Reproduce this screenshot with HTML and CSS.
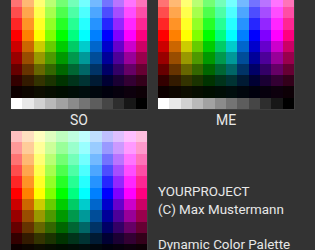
FILE: index.html
```html
<!DOCTYPE html>
<html lang="en">
<head>
  <meta charset="UTF-8">
  <meta name="viewport" content="width=device-width, initial-scale=1.0">
  <title>Dynamic Color Palette</title>
  <link rel="stylesheet" href="styles.css">
</head>
<body>
  <div class="page">
    <div class="slot">
      <div class="palette"></div>
      <div class="label">SO</div>
    </div>
    <div class="slot">
      <div class="palette"></div>
      <div class="label">ME</div>
    </div>
    <div class="slot">
      <div class="palette"></div>
      <div class="label">&nbsp;</div>
    </div>
    <div class="info">
      <p>YOURPROJECT</p>
      <p>(C) Max Mustermann</p>
      <p>&nbsp;</p>
      <p>Dynamic Color Palette</p>
    </div>
  </div>
  <script>
    const hues = [0, 30, 60, 90, 120, 150, 180, 210, 240, 270, 300, 330];
    const tints = [0.75, 0.6, 0.45, 0.3, 0.15, 0];
    const shades = [0.8, 0.6, 0.4, 0.2, 0.05];

    function hueRgb(h) {
      const f = n => {
        const k = (n + h / 60) % 6;
        return 1 - Math.max(0, Math.min(k, 4 - k, 1));
      };
      return [f(5), f(3), f(1)];
    }

    function toCss(rgb) {
      return 'rgb(' + rgb.map(v => Math.round(v * 255)).join(',') + ')';
    }

    function rows() {
      const out = [];
      tints.forEach(t => out.push(hues.map(h => hueRgb(h).map(v => v + (1 - v) * t))));
      shades.forEach(s => out.push(hues.map(h => hueRgb(h).map(v => v * s))));
      out.push(hues.map((h, i) => { const g = 1 - i / 11; return [g, g, g]; }));
      return out;
    }

    document.querySelectorAll('.palette').forEach(p => {
      rows().forEach(row => {
        row.forEach(rgb => {
          const c = document.createElement('div');
          c.className = 'swatch';
          c.style.background = toCss(rgb);
          p.appendChild(c);
        });
      });
    });
  </script>
</body>
</html>
```

FILE: styles.css
```css
:root {
  --bg: #333333;
  --edge: #3e3e3e;
  --text: #e8e8e8;
}

body {
  margin: 0;
  background: var(--bg);
  color: var(--text);
  font-family: Roboto, "Noto Sans", sans-serif;
  font-size: 13.4px;
  overflow: hidden;
}

.page {
  display: grid;
  grid-template-columns: 136px 136px;
  column-gap: 11px;
  padding: 0 11px;
  margin-top: -27px;
}

.slot {
  display: flex;
  flex-direction: column;
}

.palette {
  width: 136px;
  height: 136px;
  display: grid;
  grid-template-columns: repeat(12, 1fr);
  grid-template-rows: repeat(12, 1fr);
  box-shadow: 1px 1px 0 var(--edge);
}

.label {
  height: 22px;
  line-height: 22px;
  text-align: center;
  font-size: 14px;
}

.info {
  padding-top: 52px;
  white-space: nowrap;
}

.info p {
  margin: 0;
  line-height: 17.5px;
}
```
